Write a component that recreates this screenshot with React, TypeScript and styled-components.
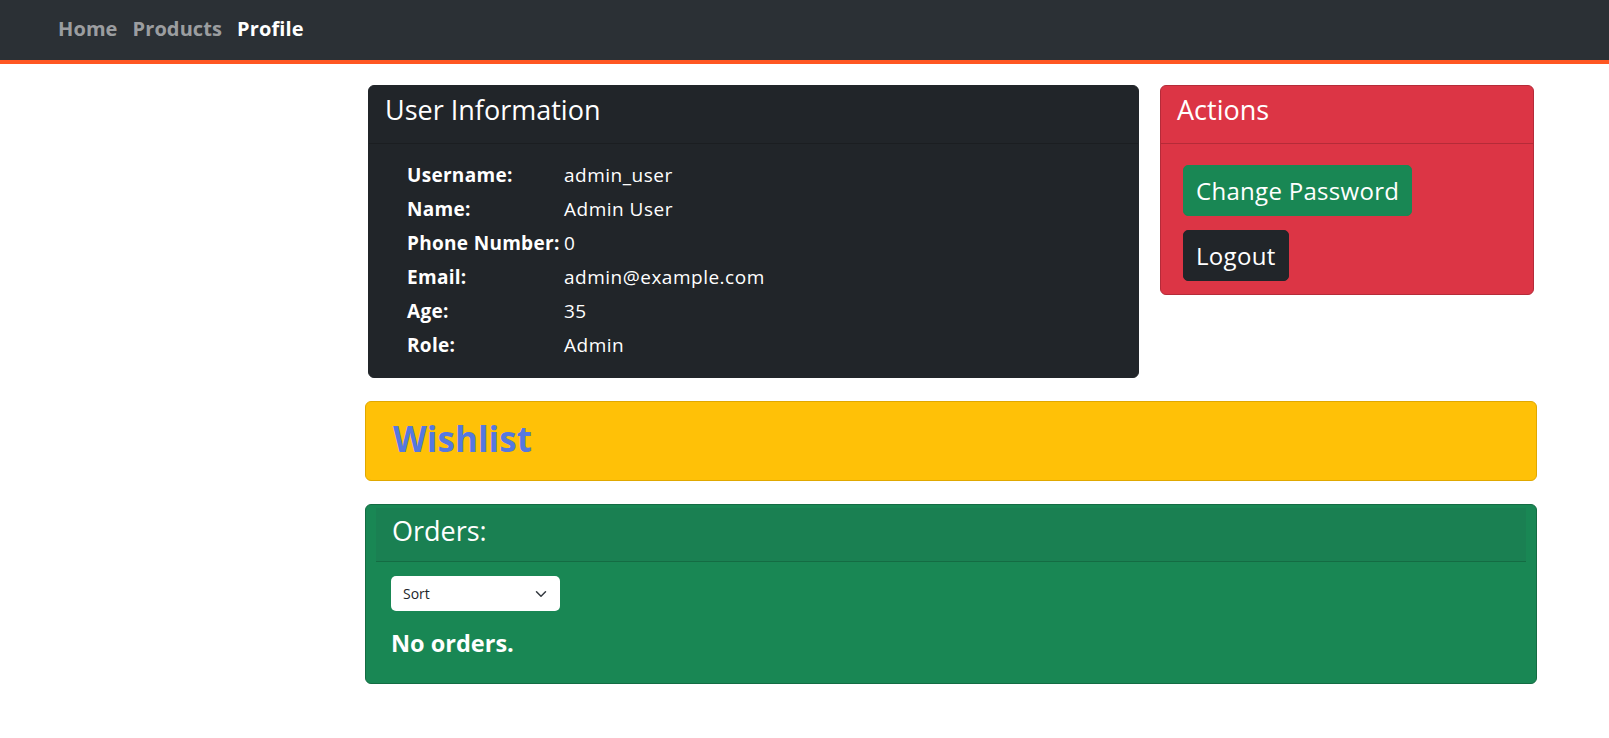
import React from "react";
import styled, { createGlobalStyle } from "styled-components";

const Global = createGlobalStyle`
  * { box-sizing: border-box; }
  body {
    margin: 0;
    font-family: "Open Sans", "Noto Sans", sans-serif;
    background: #ffffff;
    color: #212529;
  }
`;

const NavBar = styled.nav`
  height: 64px;
  background: #2b3035;
  border-bottom: 4px solid #ff5722;
  display: flex;
  align-items: center;
  padding: 0 0 3px 58px;
  gap: 15px;
`;

const NavLink = styled.a<{ $active?: boolean }>`
  font-size: 20px;
  font-weight: 700;
  letter-spacing: 0.1px;
  color: ${(p) => (p.$active ? "#ffffff" : "rgba(255,255,255,0.55)")};
  text-decoration: none;
`;

const Main = styled.main`
  width: 1172px;
  margin-left: 365px;
  padding-top: 21px;
  display: flex;
  flex-direction: column;
  gap: 23px;
`;

const TopRow = styled.div`
  display: flex;
  gap: 21px;
  margin: 0 3px;
  align-items: flex-start;
`;

const Card = styled.section<{ $bg: string; $border: string; $width?: string }>`
  background: ${(p) => p.$bg};
  border: 1px solid ${(p) => p.$border};
  border-radius: 6px;
  color: #ffffff;
  ${(p) => (p.$width ? `width: ${p.$width};` : "flex: 1;")}
  overflow: hidden;
`;

const CardHeader = styled.header`
  height: 58px;
  padding: 7px 16px 0;
  border-bottom: 1px solid rgba(0, 0, 0, 0.175);
`;

const HeaderTitle = styled.h3`
  margin: 0;
  font-size: 27px;
  font-weight: 400;
  line-height: 33px;
`;

const InfoBody = styled.div`
  padding: 14px 16px 15px 38px;
`;

const InfoRow = styled.div`
  display: grid;
  grid-template-columns: 157px 1fr;
  height: 34px;
  align-items: center;
  font-size: 19px;
  letter-spacing: 0.5px;
`;

const Label = styled.span`
  font-weight: 700;
  white-space: nowrap;
  letter-spacing: 0.3px;
`;

const Value = styled.span`
  font-weight: 400;
`;

const ActionsBody = styled.div`
  padding: 21px 16px 13px 22px;
  display: flex;
  flex-direction: column;
  align-items: flex-start;
  gap: 14px;
`;

const Button = styled.button<{ $bg: string }>`
  background: ${(p) => p.$bg};
  color: #ffffff;
  border: 1px solid ${(p) => p.$bg};
  border-radius: 5px;
  height: 51px;
  padding: 0 12px;
  font-family: inherit;
  font-size: 24px;
  letter-spacing: 0.3px;
  font-weight: 400;
  cursor: pointer;
`;

const WishlistCard = styled.section`
  height: 80px;
  background: #ffc107;
  border: 1px solid #e0a800;
  border-radius: 6px;
  display: flex;
  align-items: center;
  padding: 0 0 6px 27px;
`;

const WishlistTitle = styled.h2`
  margin: 0;
  font-size: 35px;
  font-weight: 700;
  color: #5578e0;
`;

const OrdersCard = styled.section`
  height: 180px;
  background: #198754;
  border: 1px solid #146c43;
  border-radius: 6px;
  color: #ffffff;
  padding: 3px 10px 0;
`;

const OrdersHeader = styled.header`
  height: 54px;
  background: #1a8052;
  border-bottom: 1px solid #146c43;
  padding: 6px 16px 0;
`;

const OrdersBody = styled.div`
  padding: 14px 15px 0;
  display: flex;
  flex-direction: column;
  gap: 18px;
`;

const SelectBox = styled.div`
  width: 169px;
  height: 35px;
  background: #ffffff;
  border-radius: 5px;
  display: flex;
  align-items: center;
  justify-content: space-between;
  padding: 0 13px 0 12px;
  color: #212529;
  font-size: 14px;
`;

const EmptyText = styled.h4`
  margin: 0;
  font-size: 23.5px;
  font-weight: 700;
  line-height: 29px;
`;

const rows: [string, string][] = [
  ["Username:", "admin_user"],
  ["Name:", "Admin User"],
  ["Phone Number:", "0"],
  ["Email:", "admin@example.com"],
  ["Age:", "35"],
  ["Role:", "Admin"],
];

export default function App() {
  return (
    <>
      <Global />
      <NavBar>
        <NavLink href="#">Home</NavLink>
        <NavLink href="#">Products</NavLink>
        <NavLink href="#" $active>
          Profile
        </NavLink>
      </NavBar>
      <Main>
        <TopRow>
          <Card $bg="#212529" $border="#212529" $width="771px">
            <CardHeader>
              <HeaderTitle>User Information</HeaderTitle>
            </CardHeader>
            <InfoBody>
              {rows.map(([l, v]) => (
                <InfoRow key={l}>
                  <Label>{l}</Label>
                  <Value>{v}</Value>
                </InfoRow>
              ))}
            </InfoBody>
          </Card>
          <Card $bg="#dc3545" $border="#b52b39">
            <CardHeader>
              <HeaderTitle>Actions</HeaderTitle>
            </CardHeader>
            <ActionsBody>
              <Button $bg="#198754">Change Password</Button>
              <Button $bg="#212529">Logout</Button>
            </ActionsBody>
          </Card>
        </TopRow>
        <WishlistCard>
          <WishlistTitle>Wishlist</WishlistTitle>
        </WishlistCard>
        <OrdersCard>
          <OrdersHeader>
            <HeaderTitle>Orders:</HeaderTitle>
          </OrdersHeader>
          <OrdersBody>
            <SelectBox>
              <span>Sort</span>
              <svg width="12" height="12" viewBox="0 0 16 16" fill="none">
                <path d="M2 5l6 6 6-6" stroke="#343a40" strokeWidth="2" strokeLinecap="round" strokeLinejoin="round" />
              </svg>
            </SelectBox>
            <EmptyText>No orders.</EmptyText>
          </OrdersBody>
        </OrdersCard>
      </Main>
    </>
  );
}
